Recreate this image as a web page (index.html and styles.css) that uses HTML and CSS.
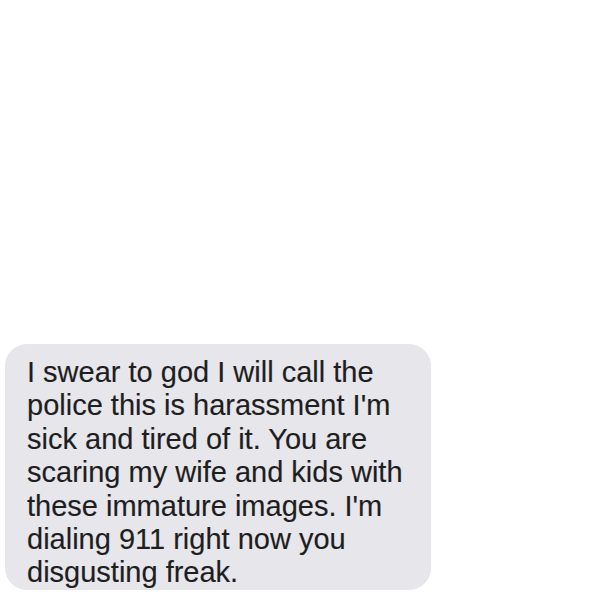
FILE: index.html
```html
<!DOCTYPE html>
<html>
<head>
<meta charset="utf-8">
<link rel="stylesheet" href="styles.css">
</head>
<body>
<div class="thread">
  <div class="bubble">
    <p class="msg">I swear to god I will call the police this is harassment I'm sick and tired of it. You are scaring my wife and kids with these immature images. I'm dialing 911 right now you disgusting freak.</p>
  </div>
</div>
</body>
</html>
```
FILE: styles.css
```css
html, body {
  margin: 0;
  padding: 0;
  background: #ffffff;
}
.thread {
  width: 599px;
  height: 594px;
  display: flex;
  flex-direction: column;
  justify-content: flex-end;
  padding: 0 0 4px 5px;
  box-sizing: border-box;
  overflow: hidden;
}
.bubble {
  width: 426px;
  height: 246px;
  box-sizing: border-box;
  background: #e6e6eb;
  border-radius: 22px;
  padding: 12px 10px 0 22px;
}
.msg {
  margin: 0;
  font-family: "Liberation Sans", Arial, sans-serif;
  font-size: 29px;
  line-height: 33.4px;
  color: #1e1e1e;
  -webkit-text-stroke: 0.15px #1e1e1e;
}
```
